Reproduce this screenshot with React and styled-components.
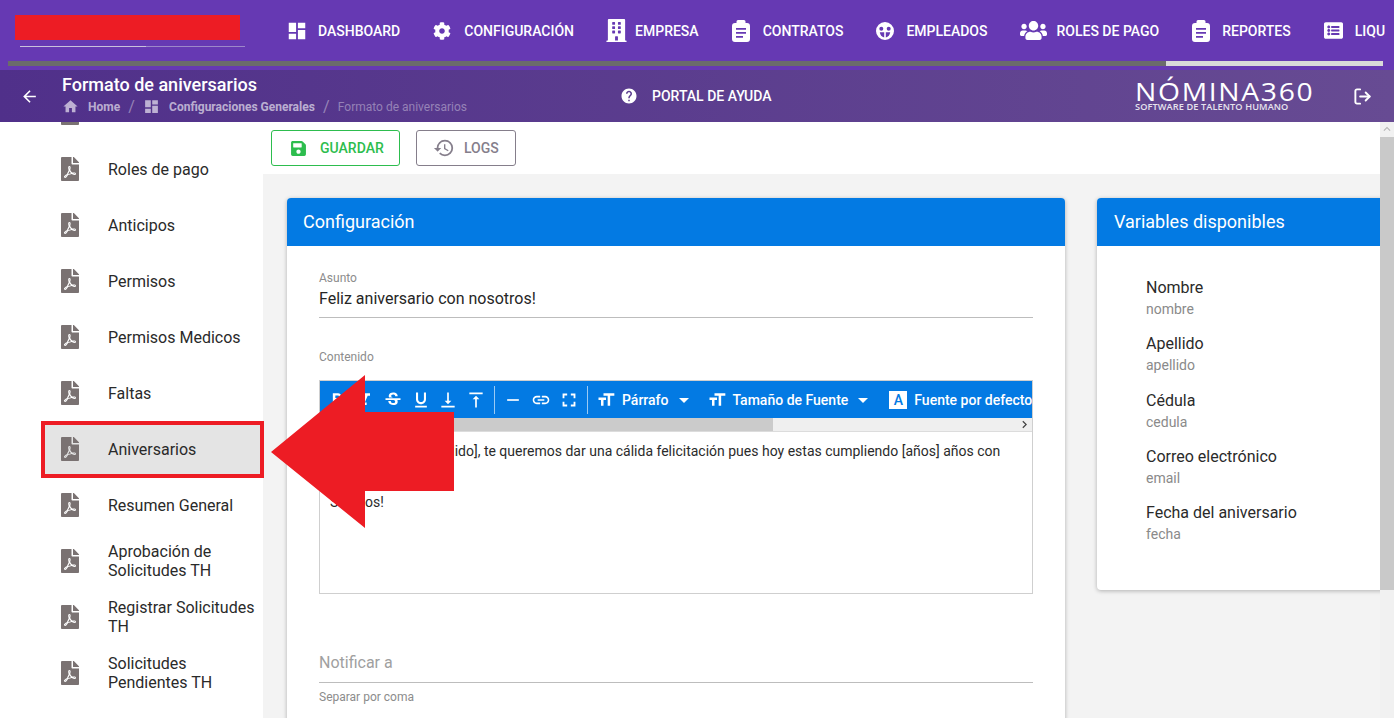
import React from "react"
import styled, { createGlobalStyle } from "styled-components"
import {
  MdDashboard,
  MdArrowBack,
  MdHome,
  MdHelp,
  MdHistory,
  MdFormatBold,
  MdFormatItalic,
  MdStrikethroughS,
  MdFormatUnderlined,
  MdVerticalAlignBottom,
  MdVerticalAlignTop,
  MdRemove,
  MdLink,
  MdFullscreen,
  MdFormatSize,
  MdArrowDropDown,
  MdChevronRight,
  MdKeyboardArrowUp,
} from "react-icons/md"
import { FaCog, FaBuilding, FaUsers, FaListAlt, FaFilePdf, FaSave } from "react-icons/fa"
import { LuLogOut } from "react-icons/lu"

const GlobalStyle = createGlobalStyle`
  html, body {
    margin: 0;
    height: 100%;
    overflow: hidden;
    background: #fff;
  }
  body {
    font-family: Roboto, "Liberation Sans", sans-serif;
    color: #212121;
  }
  * {
    box-sizing: border-box;
  }
`

const Page = styled.div`
  position: relative;
  width: 1394px;
  height: 718px;
  overflow: hidden;
  display: flex;
  flex-direction: column;
`

const TopBar = styled.header`
  height: 70px;
  flex: none;
  background: #6639b3;
  display: flex;
  flex-direction: column;
`

const TopRow = styled.div`
  height: 61px;
  display: flex;
  overflow: hidden;
  margin-right: 9px;
`

const Brand = styled.div`
  width: 288px;
  flex: none;
  padding: 15px 0 0 15px;
`

const BrandBlock = styled.div`
  width: 225px;
  height: 25px;
  background: #ed1c24;
`

const BrandLine = styled.div`
  width: 225px;
  height: 1px;
  margin: 6px 0 0 5px;
  background: linear-gradient(to right, #c9c0dc 56%, #9d87c9 56%);
`

const MainNav = styled.nav`
  display: flex;
  align-items: center;
  gap: 33px;
  height: 61px;
`

const NavItem = styled.a`
  display: flex;
  align-items: center;
  gap: ${props => props.$gap || 12}px;
  color: #fff;
  font-size: 14px;
  font-weight: 500;
  white-space: nowrap;
  text-transform: uppercase;

  svg {
    flex: none;
  }
`

const NavScroll = styled.div`
  height: 5px;
  margin: 0 11px 0 8px;
  background: #d9d9d9;
`

const NavThumb = styled.div`
  height: 100%;
  background: #6b6b6b;
`

const SubBar = styled.div`
  position: relative;
  z-index: 2;
  height: 52px;
  flex: none;
  display: flex;
  align-items: center;
  padding: 0 22px 0 20px;
  background: linear-gradient(to right, #50308a, #674b93);
  color: #fff;
`

const BackButton = styled.div`
  width: 42px;
  flex: none;
  display: flex;
  align-items: center;
`

const TitleBlock = styled.div`
  width: 558px;
  flex: none;
  margin-top: -2px;
`

const PageTitle = styled.div`
  font-size: 18px;
  font-weight: 500;
  line-height: 20px;
  margin-top: -1px;
`

const Crumbs = styled.div`
  display: flex;
  align-items: center;
  height: 16px;
  margin-top: 4px;
  font-size: 12px;
  font-weight: 700;
  color: rgba(255, 255, 255, 0.62);
`

const Crumb = styled.span`
  display: flex;
  align-items: center;
  gap: 9px;
  font-weight: ${props => (props.$current ? 400 : 700)};
  color: ${props => (props.$current ? "rgba(255,255,255,0.38)" : "inherit")};
`

const CrumbSlash = styled.span`
  margin: 0 8.2px;
  font-size: 16px;
  font-weight: 400;
  color: rgba(255, 255, 255, 0.4);
`

const HelpLink = styled.div`
  display: flex;
  align-items: center;
  gap: 14px;
  font-size: 14px;
  font-weight: 500;
`

const Logo = styled.div`
  margin-left: auto;
  margin-right: 36px;
  width: 182px;
  display: flex;
  flex-direction: column;
`

const LogoName = styled.div`
  font-family: "Open Sans", sans-serif;
  font-size: 25px;
  line-height: 22px;
  font-weight: 500;
  letter-spacing: 1.5px;
  white-space: nowrap;
  transform: scaleX(1.13);
  transform-origin: left center;
`

const LogoTag = styled.div`
  font-family: "Open Sans", sans-serif;
  font-size: 9.2px;
  line-height: 10px;
  font-weight: 600;
  letter-spacing: 0.1px;
  white-space: nowrap;
  opacity: 0.85;
`

const Body = styled.div`
  flex: 1;
  min-height: 0;
  display: flex;
`

const Sidebar = styled.aside`
  width: 263px;
  flex: none;
  background: #fff;
`

const SideList = styled.div`
  margin-top: -37px;
`

const SideItem = styled.div`
  position: relative;
  height: 56px;
  display: flex;
  align-items: center;
  gap: 26px;
  padding: 0 8px 0 59px;
  font-size: 16px;
  line-height: 19px;
  background: ${props =>
    props.$active ? "linear-gradient(to right, transparent 41px, #e4e4e4 41px)" : "transparent"};
  color: #2a2a2a;

  svg {
    flex: none;
    color: #7a7272;
  }

  ${props =>
    props.$active &&
    `
    &::after {
      content: "";
      box-sizing: border-box;
      position: absolute;
      left: 41px;
      top: 0;
      width: 223px;
      height: 57px;
      border: 4.5px solid #ed1c24;
    }
  `}
`

const Main = styled.main`
  flex: 1;
  min-width: 0;
  display: flex;
  flex-direction: column;
  background: #f3f3f3;
`

const ActionBar = styled.div`
  height: 52px;
  flex: none;
  display: flex;
  align-items: flex-start;
  gap: 16px;
  padding: 8px 0 0 8px;
  background: #fff;
`

const ActionButton = styled.button`
  height: 36px;
  width: ${props => props.$width}px;
  display: flex;
  align-items: center;
  gap: ${props => props.$gap}px;
  padding: 0 0 0 ${props => props.$pad}px;
  background: #fff;
  border: 1px solid ${props => props.$color};
  border-radius: 3px;
  color: ${props => props.$color};
  font-family: inherit;
  font-size: 14px;
  font-weight: 500;
`

const Columns = styled.div`
  display: flex;
  align-items: flex-start;
  gap: 32px;
  padding: 24px 0 0 24px;
`

const Card = styled.section`
  width: ${props => props.$width}px;
  flex: none;
  background: #fff;
  border-radius: 4px;
  box-shadow: 0 1px 4px rgba(0, 0, 0, 0.28);
  overflow: hidden;
`

const CardHeader = styled.h2`
  height: 48px;
  margin: 0;
  padding: 0 16px 2px ${props => props.$pad || 16}px;
  display: flex;
  align-items: center;
  background: #037ae3;
  color: #fff;
  font-size: 18px;
  font-weight: 400;
`

const CardBody = styled.div`
  padding: 25px 32px 30px;
`

const FieldLabel = styled.div`
  font-size: 12px;
  line-height: 14px;
  color: #8c8c8c;
`

const FieldValue = styled.div`
  height: 33px;
  padding-top: 4px;
  font-size: 16px;
  line-height: 20px;
  color: #262626;
  border-bottom: 1px solid #bdbdbd;
`

const EditorLabel = styled(FieldLabel)`
  margin-top: 32px;
`

const Editor = styled.div`
  height: 214px;
  margin-top: 16px;
  border: 1px solid #cfcfcf;
`

const ToolStrip = styled.div`
  height: 37px;
  display: flex;
  align-items: center;
  padding-left: 3px;
  overflow: hidden;
  background: #037ae3;
  color: #fff;
`

const ToolIcon = styled.span`
  width: 28px;
  height: 28px;
  flex: none;
  display: flex;
  align-items: center;
  justify-content: center;
`

const ToolSep = styled.span`
  width: 1px;
  height: 28px;
  flex: none;
  margin: 0 ${props => props.$right ?? 4}px 0 ${props => props.$left ?? 4}px;
  background: rgba(255, 255, 255, 0.6);
`

const ToolSelect = styled.span`
  display: flex;
  align-items: center;
  flex: none;
  margin-right: ${props => props.$gap ?? 14}px;
  font-size: 14px;
  font-weight: 500;
  white-space: nowrap;

  > svg {
    margin-left: 3px;
  }
`

const ToolCaption = styled.span`
  margin-left: 2px;
`

const FontBadge = styled.span`
  width: 18px;
  height: 18px;
  display: flex;
  align-items: center;
  justify-content: center;
  background: #fff;
  color: #037ae3;
  font-size: 14px;
  font-weight: 500;
`

const ToolScroll = styled.div`
  height: 14px;
  position: relative;
  background: #efefef;
  border-bottom: 1px solid #dcdcdc;
`

const ToolThumb = styled.div`
  height: 100%;
  width: 453px;
  background: #cbcbcb;
`

const ScrollArrow = styled.span`
  position: absolute;
  right: 0;
  top: -1px;
  display: flex;
  color: #444;
`

const EditorText = styled.div`
  padding: 9px 10px;
  font-size: 14px;
  line-height: 20px;
  color: #2b2b2b;

  p {
    margin: 0 0 11px;
  }
`

const NotifyField = styled.div`
  margin-top: 59px;
  height: 30px;
  font-size: 16px;
  line-height: 20px;
  color: #a0a0a0;
  border-bottom: 1px solid #bdbdbd;
`

const Hint = styled.div`
  margin-top: 7px;
  font-size: 12px;
  line-height: 14px;
  color: #8c8c8c;
`

const VarList = styled.div`
  height: 344px;
  padding: 32px 0 0 49px;
`

const VarItem = styled.div`
  height: 56.3px;
`

const VarName = styled.div`
  font-size: 16px;
  line-height: 20px;
  color: #2a2a2a;
`

const VarKey = styled.div`
  margin-top: 2px;
  font-size: 14px;
  line-height: 18px;
  color: #8a8a8a;
`

const PageScroll = styled.div`
  width: 14px;
  flex: none;
  display: flex;
  flex-direction: column;
  background: #f1f1f1;
`

const ScrollUp = styled.div`
  height: 15px;
  display: flex;
  justify-content: center;
  color: #b5b5b5;
`

const PageThumb = styled.div`
  height: 453px;
  background: #c9c9c9;
`

const Annotation = styled.svg`
  position: absolute;
  left: 271px;
  top: 375px;
`

// no package has these two, drawn from the nav bar
const EmployeesIcon = () => (
  <svg width="18" height="18" viewBox="0 0 18 18" fill="#fff">
    <path
      fillRule="evenodd"
      d="M9 0a9 9 0 1 0 0 18A9 9 0 0 0 9 0zM5.300 4.800a2 2 0 1 1 0 4 2 2 0 0 1 0-4zm7.400 0a2 2 0 1 1 0 4 2 2 0 0 1 0-4zM3.800 10.300h4.400v5.200c-2.400-.5-4.100-2.600-4.400-5.200zm6 0h4.400c-.3 2.600-2 4.700-4.400 5.200v-5.200z"
    />
  </svg>
)

const ClipboardIcon = () => (
  <svg width="18" height="22" viewBox="0 0 18 22" fill="#fff">
    <path
      fillRule="evenodd"
      d="M6 0h6a1.500 1.500 0 0 1 1.500 1.500V3H15a3 3 0 0 1 3 3v13a3 3 0 0 1-3 3H3a3 3 0 0 1-3-3V6a3 3 0 0 1 3-3h1.500V1.500A1.500 1.500 0 0 1 6 0zM4 8v1.800h10V8H4zm0 4v1.800h10V12H4zm0 4v1.800h7V16H4z"
    />
  </svg>
)

const navItems = [
  { label: "Dashboard", icon: <MdDashboard size={22} style={{ margin: "0 -2px" }} /> },
  { label: "Configuración", icon: <FaCog size={18} />, gap: 13 },
  { label: "Empresa", icon: <FaBuilding size={23} style={{ margin: "0 -2px" }} />, gap: 9 },
  { label: "Contratos", icon: <ClipboardIcon />, gap: 13 },
  { label: "Empleados", icon: <EmployeesIcon /> },
  { label: "Roles de pago", icon: <FaUsers size={27} />, gap: 9 },
  { label: "Reportes", icon: <ClipboardIcon /> },
  { label: "Liquidaciones", icon: <FaListAlt size={19} /> },
]

const sideItems = [
  "Contratos",
  "Roles de pago",
  "Anticipos",
  "Permisos",
  "Permisos Medicos",
  "Faltas",
  "Aniversarios",
  "Resumen General",
  "Aprobación de Solicitudes TH",
  "Registrar Solicitudes TH",
  "Solicitudes Pendientes TH",
]

const variables = [
  { name: "Nombre", key: "nombre" },
  { name: "Apellido", key: "apellido" },
  { name: "Cédula", key: "cedula" },
  { name: "Correo electrónico", key: "email" },
  { name: "Fecha del aniversario", key: "fecha" },
]

const App = () => (
  <Page>
    <GlobalStyle />
    <TopBar>
      <TopRow>
        <Brand>
          <BrandBlock />
          <BrandLine />
        </Brand>
        <MainNav>
          {navItems.map(item => (
            <NavItem key={item.label} $gap={item.gap}>
              {item.icon}
              {item.label}
            </NavItem>
          ))}
        </MainNav>
      </TopRow>
      <NavScroll>
        <NavThumb style={{ width: "84.2%" }} />
      </NavScroll>
    </TopBar>
    <SubBar>
      <BackButton>
        <MdArrowBack size={19} />
      </BackButton>
      <TitleBlock>
        <PageTitle>Formato de aniversarios</PageTitle>
        <Crumbs>
          <Crumb>
            <MdHome size={17} />
            Home
          </Crumb>
          <CrumbSlash>/</CrumbSlash>
          <Crumb>
            <MdDashboard size={17} />
            Configuraciones Generales
          </Crumb>
          <CrumbSlash>/</CrumbSlash>
          <Crumb $current>Formato de aniversarios</Crumb>
        </Crumbs>
      </TitleBlock>
      <HelpLink>
        <MdHelp size={18} />
        PORTAL DE AYUDA
      </HelpLink>
      <Logo>
        <LogoName>NÓMINA360</LogoName>
        <LogoTag>SOFTWARE DE TALENTO HUMANO</LogoTag>
      </Logo>
      <LuLogOut size={19} strokeWidth={2.4} />
    </SubBar>
    <Body>
      <Sidebar>
        <SideList>
          {sideItems.map(label => (
            <SideItem key={label} $active={label === "Aniversarios"}>
              <FaFilePdf size={24} style={{ marginLeft: "-1px" }} />
              <span>{label}</span>
            </SideItem>
          ))}
        </SideList>
      </Sidebar>
      <Main>
        <ActionBar>
          <ActionButton $width={129} $gap={13} $pad={18} $color="#2dbd4e">
            <FaSave size={17} />
            GUARDAR
          </ActionButton>
          <ActionButton $width={100} $gap={9} $pad={16} $color="#857e8b">
            <MdHistory size={22} />
            LOGS
          </ActionButton>
        </ActionBar>
        <Columns>
          <Card $width={778}>
            <CardHeader>Configuración</CardHeader>
            <CardBody>
              <FieldLabel>Asunto</FieldLabel>
              <FieldValue>Feliz aniversario con nosotros!</FieldValue>
              <EditorLabel>Contenido</EditorLabel>
              <Editor>
                <ToolStrip>
                  <ToolIcon><MdFormatBold size={20} /></ToolIcon>
                  <ToolIcon><MdFormatItalic size={20} /></ToolIcon>
                  <ToolIcon><MdStrikethroughS size={20} /></ToolIcon>
                  <ToolIcon><MdFormatUnderlined size={20} /></ToolIcon>
                  <ToolIcon style={{ marginLeft: -1 }}><MdVerticalAlignBottom size={20} /></ToolIcon>
                  <ToolIcon><MdVerticalAlignTop size={20} /></ToolIcon>
                  <ToolSep />
                  <ToolIcon><MdRemove size={20} /></ToolIcon>
                  <ToolIcon><MdLink size={20} /></ToolIcon>
                  <ToolIcon><MdFullscreen size={22} /></ToolIcon>
                  <ToolSep />
                  <ToolSelect $gap={7}>
                    <ToolIcon><MdFormatSize size={20} /></ToolIcon>
                    <ToolCaption>Párrafo</ToolCaption>
                    <MdArrowDropDown size={24} />
                  </ToolSelect>
                  <ToolSelect $gap={9}>
                    <ToolIcon><MdFormatSize size={20} /></ToolIcon>
                    <ToolCaption>Tamaño de Fuente</ToolCaption>
                    <MdArrowDropDown size={24} />
                  </ToolSelect>
                  <ToolSelect $gap={0}>
                    <ToolIcon><FontBadge>A</FontBadge></ToolIcon>
                    <ToolCaption>Fuente por defecto</ToolCaption>
                  </ToolSelect>
                </ToolStrip>
                <ToolScroll>
                  <ToolThumb />
                  <ScrollArrow><MdChevronRight size={15} /></ScrollArrow>
                </ToolScroll>
                <EditorText>
                  <p>
                    Hola [nombre] [apellido], te queremos dar una cálida felicitación pues hoy
                    estas cumpliendo [años] años con nosotros!
                  </p>
                  <p>Saludos!</p>
                </EditorText>
              </Editor>
              <NotifyField>Notificar a</NotifyField>
              <Hint>Separar por coma</Hint>
            </CardBody>
          </Card>
          <Card $width={320}>
            <CardHeader $pad={17}>Variables disponibles</CardHeader>
            <VarList>
              {variables.map(item => (
                <VarItem key={item.key}>
                  <VarName>{item.name}</VarName>
                  <VarKey>{item.key}</VarKey>
                </VarItem>
              ))}
            </VarList>
          </Card>
        </Columns>
      </Main>
      <PageScroll>
        <ScrollUp><MdKeyboardArrowUp size={14} /></ScrollUp>
        <PageThumb />
      </PageScroll>
    </Body>
    <Annotation width="184" height="154" viewBox="0 0 184 154">
      <path d="M0 77 L94 0 V37 H183 V116 H94 V153 Z" fill="#ed1c24" />
    </Annotation>
  </Page>
)

export default App
